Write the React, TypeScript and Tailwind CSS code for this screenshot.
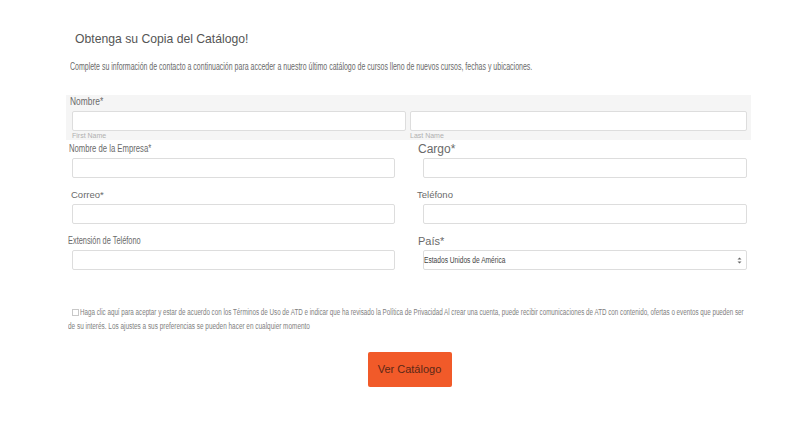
const sans = { fontFamily: '"Liberation Sans", Arial, sans-serif' };

function Squeeze({ children, className }: { children: React.ReactNode; className: string }) {
  return <span className={"inline-block whitespace-nowrap origin-left " + className}>{children}</span>;
}

export default function App() {
  return (
    <div className="w-[810px] h-[427px] bg-white text-[#555] overflow-hidden" style={sans}>
      <div className="pl-[66px] w-[751px] pt-[31px]">
        <h1 className="pl-[9px] text-[12.2px] text-[#555] h-[16px] leading-[16px]">Obtenga su Copia del Catálogo!</h1>
        <p className="pl-[4px] mt-[13px] h-[14px] leading-[14px] text-[10px] text-[#6a6a6a]">
          <Squeeze className="scale-x-[0.7]">
            Complete su información de contacto a continuación para acceder a nuestro último catálogo de cursos lleno de nuevos cursos, fechas y ubicaciones.
          </Squeeze>
        </p>

        <div className="mt-[21px] bg-[#f5f5f5] px-[4px]">
          <div className="h-[14px] leading-[14px] text-[10px] text-[#6a6a6a]">
            <Squeeze className="scale-x-[0.84]">Nombre*</Squeeze>
          </div>
          <div className="mt-[2px] grid grid-cols-[334px_337px] gap-[4px] pl-[2px]">
            <div>
              <input className="block w-full h-[20px] bg-white border border-[#ddd] rounded-[2px]" />
              <div className="text-[7px] text-[#b0b0b0] h-[9px] leading-[9px]">First Name</div>
            </div>
            <div>
              <input className="block w-full h-[20px] bg-white border border-[#ddd] rounded-[2px]" />
              <div className="text-[7px] text-[#b0b0b0] h-[9px] leading-[9px]">Last Name</div>
            </div>
          </div>
        </div>

        <div className="grid grid-cols-[323px_324px] gap-x-[28px] gap-y-[8px] pl-[6px]">
          <div className="flex flex-col">
            <span className="h-[18px] leading-[18px] text-[10px] text-[#6a6a6a] -ml-[3px]">
              <Squeeze className="scale-x-[0.77]">Nombre de la Empresa*</Squeeze>
            </span>
            <input className="h-[20px] bg-white border border-[#ddd] rounded-[2px]" />
          </div>
          <div className="flex flex-col">
            <span className="h-[18px] leading-[18px] text-[12px] text-[#6a6a6a] -ml-[5px]">Cargo*</span>
            <input className="h-[20px] bg-white border border-[#ddd] rounded-[2px]" />
          </div>

          <div className="flex flex-col">
            <span className="h-[18px] leading-[18px] text-[9.5px] text-[#6a6a6a] -ml-[1px]">Correo*</span>
            <input className="h-[20px] bg-white border border-[#ddd] rounded-[2px]" />
          </div>
          <div className="flex flex-col">
            <span className="h-[18px] leading-[18px] text-[9.5px] text-[#6a6a6a] -ml-[6px]">Teléfono</span>
            <input className="h-[20px] bg-white border border-[#ddd] rounded-[2px]" />
          </div>

          <div className="flex flex-col">
            <span className="h-[18px] leading-[18px] text-[10px] text-[#6a6a6a] -ml-[4px]">
              <Squeeze className="scale-x-[0.74]">Extensión de Teléfono</Squeeze>
            </span>
            <input className="h-[20px] bg-white border border-[#ddd] rounded-[2px]" />
          </div>
          <div className="flex flex-col">
            <span className="h-[18px] leading-[18px] text-[11px] text-[#6a6a6a] -ml-[5px]">País*</span>
            <div className="h-[20px] bg-white border border-[#ddd] rounded-[2px] flex items-center justify-between pl-[0px] pr-[4px]">
              <span className="text-[8.5px] text-[#444]">
                <Squeeze className="scale-x-[0.78]">Estados Unidos de América</Squeeze>
              </span>
              <svg width="5" height="9" viewBox="0 0 5 9">
                <path d="M0.5 3.5 L2.5 1.5 L4.5 3.5 Z M0.5 5.5 L2.5 7.5 L4.5 5.5 Z" fill="#666" />
              </svg>
            </div>
          </div>
        </div>

        <div className="mt-[35px] text-[8.5px] text-[#808080]">
          <div className="h-[14px] leading-[14px] flex items-center pl-[6px]">
            <span className="inline-block w-[7px] h-[7px] border border-[#c8c8c8] mr-[1px] shrink-0"></span>
            <Squeeze className="scale-x-[0.735]">
              Haga clic aquí para aceptar y estar de acuerdo con los Términos de Uso de ATD e indicar que ha revisado la Política de Privacidad Al crear una cuenta, puede recibir comunicaciones de ATD con contenido, ofertas o eventos que pueden ser
            </Squeeze>
          </div>
          <div className="h-[14px] leading-[14px] pl-[2px]">
            <Squeeze className="scale-x-[0.755]">
              de su interés. Los ajustes a sus preferencias se pueden hacer en cualquier momento
            </Squeeze>
          </div>
        </div>

        <div className="flex justify-center mt-[19px] pl-[2px]">
          <button className="w-[84px] h-[35px] bg-[#f15a29] text-[#5b2817] text-[11px] rounded-[2px]">Ver Catálogo</button>
        </div>
      </div>
    </div>
  );
}
